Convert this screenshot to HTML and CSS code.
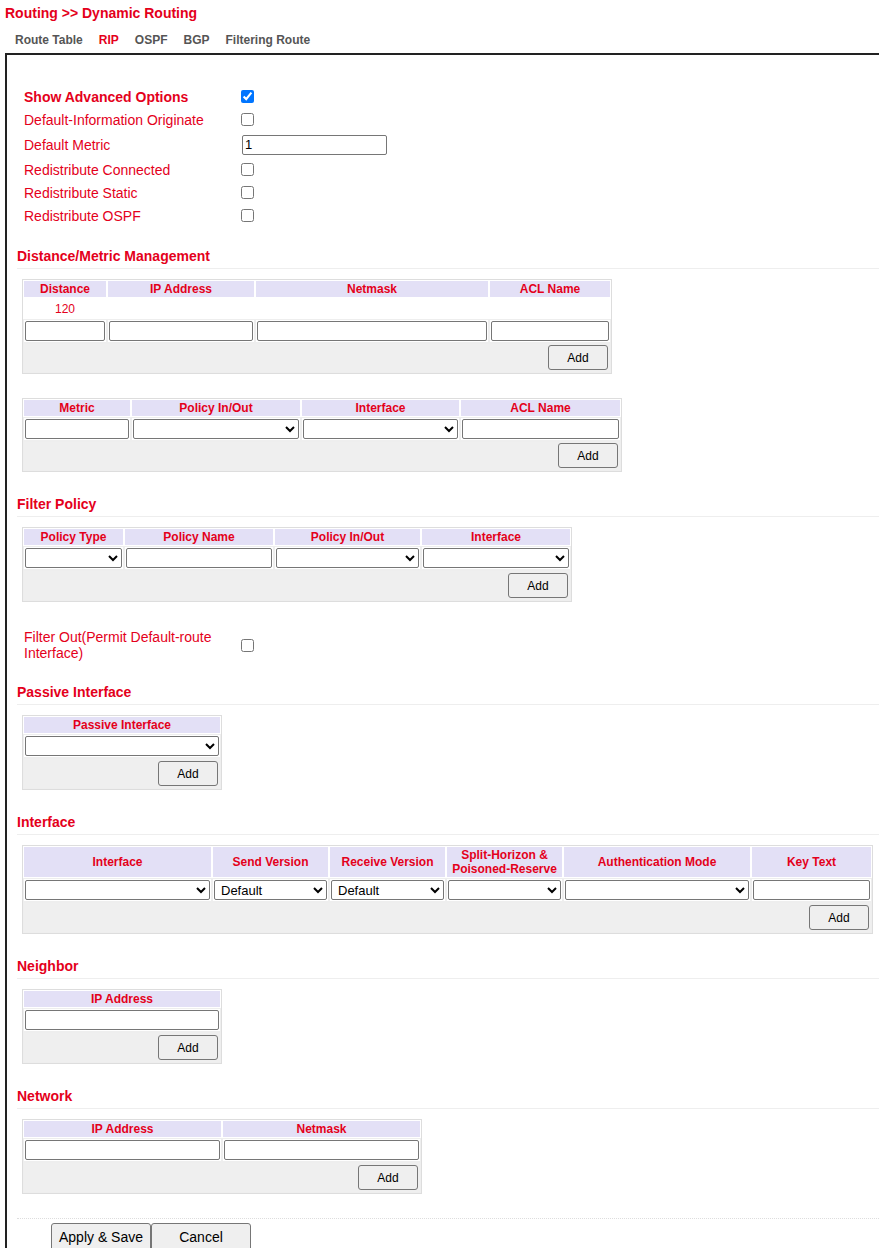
FILE: index.html
```html
<!DOCTYPE html>
<html>
	<head>
		<meta charset="UTF-8">
		<title>Dynamic Routing</title>
		<link rel="stylesheet" href="styles.css">
	</head>
	<body>
		<h1 class="title">Routing &gt;&gt; Dynamic Routing</h1>
		<ul class="tabs">
			<li>Route Table</li>
			<li class="active">RIP</li>
			<li>OSPF</li>
			<li>BGP</li>
			<li>Filtering Route</li>
		</ul>
		<div id="panel">
			<div class="opts">
				<div class="row strong"><label>Show Advanced Options</label><input type="checkbox" checked></div>
				<div class="row"><label>Default-Information Originate</label><input type="checkbox"></div>
				<div class="row tall"><label>Default Metric</label><input type="text" class="metric" value="1"></div>
				<div class="row"><label>Redistribute Connected</label><input type="checkbox"></div>
				<div class="row"><label>Redistribute Static</label><input type="checkbox"></div>
				<div class="row"><label>Redistribute OSPF</label><input type="checkbox"></div>
			</div>

			<h3 class="sec">Distance/Metric Management</h3>
			<table class="grid" id="tDist">
				<tr><th>Distance</th><th>IP Address</th><th>Netmask</th><th>ACL Name</th></tr>
				<tr><td class="val">120</td><td class="val"></td><td class="val"></td><td class="val"></td></tr>
				<tr><td><input type="text"></td><td><input type="text"></td><td><input type="text"></td><td><input type="text"></td></tr>
				<tr><td class="act" colspan="4"><button class="btn">Add</button></td></tr>
			</table>
			<table class="grid" id="tMetric">
				<tr><th>Metric</th><th>Policy In/Out</th><th>Interface</th><th>ACL Name</th></tr>
				<tr><td><input type="text"></td><td><select></select></td><td><select></select></td><td><input type="text"></td></tr>
				<tr><td class="act" colspan="4"><button class="btn">Add</button></td></tr>
			</table>

			<h3 class="sec">Filter Policy</h3>
			<table class="grid" id="tFilter">
				<tr><th>Policy Type</th><th>Policy Name</th><th>Policy In/Out</th><th>Interface</th></tr>
				<tr><td><select></select></td><td><input type="text"></td><td><select></select></td><td><select></select></td></tr>
				<tr><td class="act" colspan="4"><button class="btn">Add</button></td></tr>
			</table>
			<div class="opts single">
				<div class="row wrap"><label>Filter Out(Permit Default-route Interface)</label><input type="checkbox"></div>
			</div>

			<h3 class="sec">Passive Interface</h3>
			<table class="grid" id="tPassive">
				<tr><th>Passive Interface</th></tr>
				<tr><td><select></select></td></tr>
				<tr><td class="act"><button class="btn">Add</button></td></tr>
			</table>

			<h3 class="sec">Interface</h3>
			<table class="grid" id="tIface">
				<tr><th>Interface</th><th>Send Version</th><th>Receive Version</th><th>Split-Horizon &amp; Poisoned-Reserve</th><th>Authentication Mode</th><th>Key Text</th></tr>
				<tr>
					<td><select></select></td>
					<td><select><option>Default</option></select></td>
					<td><select><option>Default</option></select></td>
					<td><select></select></td>
					<td><select></select></td>
					<td><input type="text"></td>
				</tr>
				<tr><td class="act" colspan="6"><button class="btn">Add</button></td></tr>
			</table>

			<h3 class="sec">Neighbor</h3>
			<table class="grid" id="tNeighbor">
				<tr><th>IP Address</th></tr>
				<tr><td><input type="text"></td></tr>
				<tr><td class="act"><button class="btn">Add</button></td></tr>
			</table>

			<h3 class="sec">Network</h3>
			<table class="grid" id="tNetwork">
				<tr><th>IP Address</th><th>Netmask</th></tr>
				<tr><td><input type="text"></td><td><input type="text"></td></tr>
				<tr><td class="act" colspan="2"><button class="btn">Add</button></td></tr>
			</table>

			<div class="foot">
				<button class="big">Apply &amp; Save</button><button class="big">Cancel</button>
			</div>
		</div>
	</body>
</html>
```

FILE: styles.css
```css
html,body{
	margin: 0;
	padding: 0;
	background: #fff;
}
body{
	font-family: "Liberation Sans", Arial, sans-serif;
	font-size: 14px;
	color: #e4001b;
	overflow: hidden;
}
ul,li{
	margin: 0;
	padding: 0;
	list-style: none;
}
.title{
	margin: 0;
	padding: 5px 0 0 5px;
	font-size: 14px;
	line-height: 16px;
	font-weight: bold;
}
.tabs{
	display: flex;
	margin: 11px 0 0 7px;
}
.tabs li{
	padding: 0 8px;
	font-size: 12px;
	line-height: 16px;
	font-weight: bold;
	color: #555;
}
.tabs li.active{
	color: #e4001b;
}
#panel{
	margin: 5px 0 0 5px;
	border-top: 2px solid #222;
	border-left: 2px solid #222;
	padding: 30px 0 0 10px;
	min-height: 1300px;
}

/* option rows */
.opts{
	padding-left: 7px;
	margin-bottom: 21px;
}
.opts.single{
	padding-top: 3px;
	margin-bottom: 23px;
}
.row{
	display: flex;
	align-items: center;
	height: 23px;
}
.row.tall{
	height: 27px;
}
.row.wrap{
	height: 32px;
}
.row label{
	width: 217px;
	flex: none;
	line-height: 16px;
}
.row.strong label{
	font-weight: bold;
}
.row input[type=checkbox]{
	margin: 0;
	width: 13px;
	height: 13px;
}
.row .metric{
	width: 145px;
	margin-left: 1px;
}

/* section titles */
.sec{
	margin: 0 0 10px;
	padding-bottom: 4px;
	border-bottom: 1px solid #eee;
	font-size: 14px;
	line-height: 16px;
	font-weight: bold;
}

/* tables */
.grid{
	margin: 0 0 24px 5px;
	border: 1px solid #ddd;
	border-spacing: 0;
	table-layout: fixed;
}
.grid th{
	background: #e3e0f6;
	border: 1px solid #fff;
	padding: 1px 4px;
	font-size: 12px;
	line-height: 14px;
	font-weight: bold;
}
.grid td{
	border: 1px solid #eee;
	padding: 1px 1px;
	font-size: 12px;
	line-height: 14px;
	text-align: center;
}
.grid td.val{
	border-color: #fff;
	padding: 3px 1px 2px;
}
.grid td.act{
	background: #efefef;
	text-align: right;
	padding: 2px;
}
#tDist td.act,#tMetric td.act{
	padding: 1px 2px 2px;
}
.grid input[type=text],.grid select{
	width: 100%;
}
input[type=text],select{
	box-sizing: border-box;
	height: 20px;
	margin: 0;
	border: 1px solid #767676;
	border-radius: 2px;
	background: #fff;
	color: #000;
	font: 13px "Liberation Sans", Arial, sans-serif;
	padding: 0 2px;
}
select{
	padding: 0 0 0 2px;
}
.btn{
	width: 60px;
	height: 25px;
	background: #efefef;
	border: 1px solid #767676;
	border-radius: 3px;
	color: #000;
	font: 12px "Liberation Sans", Arial, sans-serif;
	padding: 0;
}

#tDist{ width: 590px; }
#tDist th:nth-child(1){ width: 74px; }
#tDist th:nth-child(2){ width: 138px; }
#tDist th:nth-child(3){ width: 224px; }

#tMetric{ width: 600px; }
#tMetric th:nth-child(1){ width: 98px; }
#tMetric th:nth-child(2){ width: 160px; }
#tMetric th:nth-child(3){ width: 149px; }

#tFilter{ width: 550px; }
#tFilter th:nth-child(1){ width: 91px; }
#tFilter th:nth-child(2){ width: 140px; }
#tFilter th:nth-child(3){ width: 137px; }

#tPassive,#tNeighbor{ width: 200px; }

#tIface{ width: 851px; }
#tIface th{ height: 30px; padding: 0 4px; }
#tIface th:nth-child(1){ width: 179px; }
#tIface th:nth-child(2){ width: 107px; }
#tIface th:nth-child(3){ width: 107px; }
#tIface th:nth-child(4){ width: 107px; }
#tIface th:nth-child(5){ width: 178px; }

#tNetwork{ width: 400px; }
#tNetwork th:nth-child(1){ width: 189px; }

/* footer buttons */
.foot{
	display: flex;
	border-top: 1px dotted #ddd;
	padding: 4px 0 0 34px;
}
.big{
	width: 100px;
	height: 28px;
	margin: 0;
	background: #efefef;
	border: 1px solid #767676;
	border-radius: 3px;
	color: #000;
	font: 14px "Liberation Sans", Arial, sans-serif;
	padding: 0;
}
```
